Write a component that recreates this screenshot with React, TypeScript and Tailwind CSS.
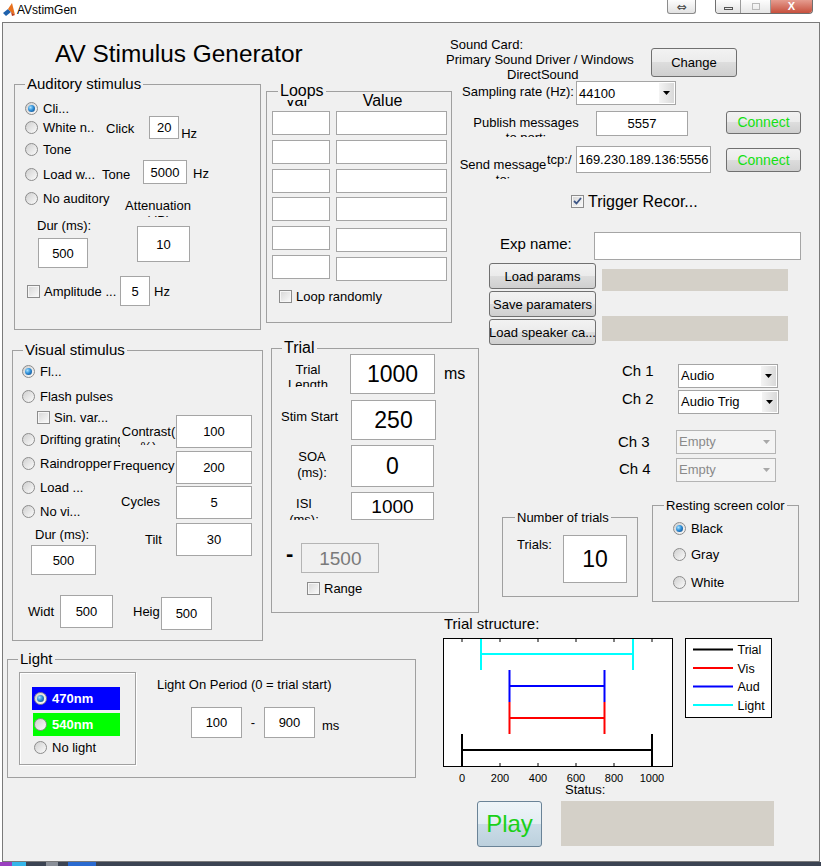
import type { ReactNode } from "react";

function Radio({ label, checked = false, className = "", h = "h-[16px]" }: { label: string; checked?: boolean; className?: string; h?: string }) {
  return (
    <div className={`flex items-center gap-[5px] whitespace-nowrap ${h} ${className}`}>
      <span className="flex h-[13px] w-[13px] shrink-0 items-center justify-center rounded-full border border-[#8c8c8c] bg-[linear-gradient(135deg,#cfcfcf,#fbfbfb)]">
        {checked && <span className="h-[7px] w-[7px] rounded-full bg-[radial-gradient(circle_at_35%_35%,#a8e2ff_0%,#2f8fd8_45%,#0b3d78_100%)]" />}
      </span>
      <span>{label}</span>
    </div>
  );
}

function Check({ label, checked = false, className = "", h = "h-[16px]", text = "text-[13px]" }: { label: string; checked?: boolean; className?: string; h?: string; text?: string }) {
  return (
    <div className={`flex items-center gap-[4px] whitespace-nowrap ${h} ${text} ${className}`}>
      <span className="flex h-[13px] w-[13px] shrink-0 items-center justify-center border border-[#8c8c8c] bg-[linear-gradient(135deg,#d6d6d6,#fbfbfb)] shadow-[inset_0_0_0_1px_#f6f6f6]">
        {checked && (
          <svg width="9" height="8" viewBox="0 0 9 8">
            <path d="M1 4 L3.5 6.5 L8 1" fill="none" stroke="#3d5686" strokeWidth="1.8" />
          </svg>
        )}
      </span>
      <span>{label}</span>
    </div>
  );
}

function Edit({ value = "", className = "", text = "text-[13px]", disabled = false }: { value?: string; className?: string; text?: string; disabled?: boolean }) {
  return (
    <div
      className={`flex shrink-0 items-center justify-center whitespace-nowrap border ${
        disabled ? "border-[#b4b4b4] bg-[#f0f0f0] text-[#7a7a7a]" : "border-[#a5a5a5] bg-white"
      } ${text} ${className}`}
    >
      {value}
    </div>
  );
}

function Btn({ children, className = "", text = "text-[13px]" }: { children: ReactNode; className?: string; text?: string }) {
  return (
    <button
      type="button"
      className={`flex shrink-0 items-center justify-center overflow-hidden whitespace-nowrap rounded-[3px] border border-[#707070] bg-[linear-gradient(#f2f2f2_0%,#ebebeb_49%,#dddddd_50%,#cfcfcf_100%)] leading-[15px] ${text} ${className}`}
    >
      {children}
    </button>
  );
}

function Popup({ value, disabled = false, className = "" }: { value: string; disabled?: boolean; className?: string }) {
  return (
    <div
      className={`flex shrink-0 items-stretch border text-[13px] ${
        disabled ? "border-[#b4b4b4] bg-[#f4f4f4] text-[#8a8a8a]" : "border-[#a5a5a5] bg-white text-black"
      } ${className}`}
    >
      <span className="flex flex-1 items-center pl-[2px]">{value}</span>
      <span
        className={`my-[1px] mr-[1px] flex w-[15px] items-center justify-center ${
          disabled ? "" : "bg-[linear-gradient(90deg,#f4f4f4,#d9d9d9)]"
        }`}
      >
        <svg width="7" height="4" viewBox="0 0 7 4">
          <path d="M0 0h7L3.5 4z" fill={disabled ? "#a8a8a8" : "#000"} />
        </svg>
      </span>
    </div>
  );
}

const loopRows = [
  { row: "mt-[4px]", val: "" },
  { row: "mt-[5px]", val: "" },
  { row: "mt-[5px]", val: "" },
  { row: "mt-[4px]", val: "" },
  { row: "mt-[5px]", val: "mt-[2px]" },
  { row: "mt-[3px]", val: "mt-[2px]" },
];

function TrialChart() {
  const x = (v: number) => 19 + v * 0.19;
  const ticks = [0, 200, 400, 600, 800, 1000];
  const bars = [
    { c: "#000000", a: 0, b: 1000, y: 112, y0: 96, y1: 128 },
    { c: "#ff0000", a: 250, b: 750, y: 80, y0: 64, y1: 96 },
    { c: "#0000ff", a: 250, b: 750, y: 48, y0: 32, y1: 64 },
    { c: "#00ffff", a: 100, b: 900, y: 16, y0: 1, y1: 32 },
  ];
  return (
    <svg width="230" height="146" viewBox="0 0 230 146" className="shrink-0 overflow-visible">
      <rect x="0.5" y="0.5" width="229" height="128" fill="#fff" stroke="#000" />
      {ticks.map((t) => (
        <g key={t}>
          <line x1={x(t)} x2={x(t)} y1="1" y2="4" stroke="#000" />
          <line x1={x(t)} x2={x(t)} y1="125" y2="128" stroke="#000" />
          <text x={x(t)} y="144" textAnchor="middle" fontSize="11" fontFamily="Liberation Sans, Arial, sans-serif" fill="#000">
            {t}
          </text>
        </g>
      ))}
      {bars.map((b) => (
        <g key={b.c} stroke={b.c} strokeWidth="2">
          <line x1={x(b.a)} x2={x(b.b)} y1={b.y} y2={b.y} />
          <line x1={x(b.a)} x2={x(b.a)} y1={b.y0} y2={b.y1} />
          <line x1={x(b.b)} x2={x(b.b)} y1={b.y0} y2={b.y1} />
        </g>
      ))}
    </svg>
  );
}

function ChartLegend() {
  const items = [
    { c: "#000000", t: "Trial", y: 11.5 },
    { c: "#ff0000", t: "Vis", y: 30 },
    { c: "#0000ff", t: "Aud", y: 48.5 },
    { c: "#00ffff", t: "Light", y: 67 },
  ];
  return (
    <svg width="87" height="80" viewBox="0 0 87 80" className="ml-[12px] shrink-0">
      <rect x="0.5" y="0.5" width="86" height="79" fill="#fff" stroke="#000" />
      {items.map((i) => (
        <g key={i.t}>
          <line x1="8" x2="48" y1={i.y} y2={i.y} stroke={i.c} strokeWidth="2" />
          <text x="52.5" y={i.y + 4.5} fontSize="12.5" fontFamily="Liberation Sans, Arial, sans-serif" fill="#000">
            {i.t}
          </text>
        </g>
      ))}
    </svg>
  );
}

function TitleBar() {
  return (
    <div className="flex h-[22px] items-start bg-white">
      <svg className="ml-[3px] mt-[3px]" width="12" height="14" viewBox="0 0 12 14">
        <path d="M0 10 L5 6 L8 9 L3 13Z" fill="#1f62ad" />
        <path d="M5 6 L9 0 L12 12 L8 9Z" fill="#e8711e" />
        <path d="M8 9 L12 12 L9 13Z" fill="#b8381a" />
      </svg>
      <span className="ml-[2px] mt-[3px] text-[12px] leading-[14px]">AVstimGen</span>
      <div className="flex-1" />
      <div className="flex h-[14px] w-[29px] items-center justify-center rounded-b-[3px] border border-t-0 border-[#8c8c8c] bg-[linear-gradient(#fdfdfd,#e2e2e2)] font-['DejaVu_Sans',sans-serif] text-[12px] leading-none text-[#444]">
        ⇔
      </div>
      <div className="ml-[19px] mr-[8px] flex h-[14px] overflow-hidden rounded-b-[4px] border border-t-0 border-[#6f6f6f]">
        <div className="flex w-[25px] items-end justify-center border-r border-[#9a9a9a] bg-[linear-gradient(#fdfdfd,#e2e2e2)] pb-[3px]">
          <span className="h-[3px] w-[9px] border border-[#555]" />
        </div>
        <div className="flex w-[30px] items-center justify-center border-r border-[#9a9a9a] bg-[linear-gradient(#fdfdfd,#e6e6e6)]">
          <span className="h-[7px] w-[8px] border border-[#b9b9b9]" />
        </div>
        <div className="flex w-[41px] items-center justify-center bg-[linear-gradient(#e59c8f,#c7503d)] text-[11px] font-bold leading-none text-white">
          X
        </div>
      </div>
    </div>
  );
}

function LeftColumn() {
  return (
    <div className="flex w-[440px] shrink-0 flex-col text-[13px] leading-[15px]">
      <div className="ml-[52px] mt-[17px] whitespace-nowrap text-[24.4px] leading-[28px]">AV Stimulus Generator</div>

      <div className="mt-[7px] flex items-start">
        <fieldset className="ml-[11px] h-[255px] w-[247px] min-w-0 shrink-0 border border-[#a0a0a0]">
          <legend className="ml-[10px] px-[2px] text-[15px] leading-[18px]">Auditory stimulus</legend>
          <Radio checked label="Cli..." className="ml-[10px] mt-[7px]" />
          <div className="flex h-[23px] items-start">
            <Radio label="White n.." className="ml-[10px] mt-[3px] w-[81px]" />
            <div className="mt-[5px]">Click</div>
            <Edit value="20" className="ml-[15px] h-[23px] w-[30px]" />
            <div className="ml-[2px] mt-[10px]">Hz</div>
          </div>
          <Radio label="Tone" className="ml-[10px] mt-[2px]" />
          <div className="mt-[3px] flex h-[24px] items-start">
            <Radio label="Load w..." className="ml-[10px] mt-[6px] w-[77px]" />
            <div className="mt-[7px] w-[41px]">Tone</div>
            <Edit value="5000" className="h-[24px] w-[44px]" />
            <div className="ml-[6px] mt-[6px]">Hz</div>
          </div>
          <div className="mt-[6px] flex items-start">
            <Radio label="No auditory" className="ml-[10px] w-[97px]" />
            <div className="mt-[8px] h-[19px] w-[72px] overflow-hidden text-center">Attenuation (dB)</div>
          </div>
          <div className="mt-[1px] flex items-start">
            <div className="ml-[22px] w-[54px] shrink-0">
              <div className="whitespace-nowrap">Dur (ms):</div>
              <Edit value="500" className="ml-[1px] mt-[5px] h-[30px] w-[50px]" />
            </div>
            <Edit value="10" className="ml-[46px] mt-[8px] h-[36px] w-[53px]" />
          </div>
          <div className="mt-[8px] flex items-start">
            <Check label="Amplitude ..." className="ml-[12px] mt-[7px] w-[93px]" />
            <Edit value="5" className="h-[30px] w-[30px]" />
            <div className="ml-[4px] mt-[8px]">Hz</div>
          </div>
        </fieldset>

        <fieldset className="ml-[5px] mt-[7px] h-[241px] w-[186px] min-w-0 shrink-0 border border-[#a0a0a0]">
          <legend className="relative z-10 ml-[11px] bg-[#f0f0f0] px-[2px] text-[16px] leading-[18px]">Loops</legend>
          <div className="-mt-[8px] flex h-[15px] overflow-hidden text-[16px] leading-[18px]">
            <span className="ml-[18px]">Var</span>
            <span className="ml-[54px]">Value</span>
          </div>
          {loopRows.map((r, i) => (
            <div key={i} className={`flex items-start ${r.row}`}>
              <Edit className="ml-[5px] h-[24px] w-[58px]" />
              <Edit className={`ml-[6px] h-[24px] w-[111px] ${r.val}`} />
            </div>
          ))}
          <Check label="Loop randomly" className="ml-[12px] mt-[7px]" />
        </fieldset>
      </div>

      <div className="mt-[9px] flex items-start">
        <fieldset className="ml-[9px] mt-[2px] h-[300px] w-[251px] min-w-0 shrink-0 border border-[#a0a0a0]">
          <legend className="ml-[10px] px-[2px] text-[15px] leading-[18px]">Visual stimulus</legend>
          <div className="flex items-start">
            <div className="flex w-[100px] shrink-0 flex-col">
              <Radio checked label="Fl..." className="ml-[9px] mt-[4px]" />
              <Radio label="Flash pulses" className="ml-[9px] mt-[9px]" />
              <Check label="Sin. var..." className="ml-[24px] mt-[5px]" />
              <Radio label="Drifting grating" className="ml-[9px] mt-[6px] w-[98px] overflow-hidden" />
              <Radio label="Raindropper" className="ml-[9px] mt-[8px]" />
              <Radio label="Load ..." className="ml-[9px] mt-[8px]" />
              <Radio label="No vi..." className="ml-[9px] mt-[8px]" />
              <div className="ml-[22px] mt-[8px] whitespace-nowrap">Dur (ms):</div>
              <Edit value="500" className="ml-[18px] mt-[3px] h-[30px] w-[65px]" />
            </div>
            <div className="mt-[56px] flex flex-col">
              <div className="flex items-start">
                <div className="ml-[8px] mt-[9px] h-[21px] w-[55px] overflow-hidden whitespace-nowrap text-center">
                  <div>Contrast(</div>
                  <div>%)</div>
                </div>
                <Edit value="100" className="h-[33px] w-[76px]" />
              </div>
              <div className="mt-[3px] flex items-start">
                <div className="mt-[7px] w-[63px] whitespace-nowrap">Frequency</div>
                <Edit value="200" className="h-[33px] w-[76px]" />
              </div>
              <div className="mt-[2px] flex items-start">
                <div className="ml-[8px] mt-[8px] w-[55px]">Cycles</div>
                <Edit value="5" className="h-[33px] w-[76px]" />
              </div>
              <div className="mt-[4px] flex items-start">
                <div className="ml-[32px] mt-[9px] w-[31px]">Tilt</div>
                <Edit value="30" className="h-[33px] w-[76px]" />
              </div>
            </div>
          </div>
          <div className="mt-[20px] flex items-start">
            <div className="ml-[15px] mt-[9px] w-[32px]">Widt</div>
            <Edit value="500" className="h-[33px] w-[53px]" />
            <div className="ml-[20px] mt-[9px] w-[28px]">Heig</div>
            <Edit value="500" className="mt-[2px] h-[33px] w-[51px]" />
          </div>
        </fieldset>

        <fieldset className="ml-[8px] h-[274px] w-[208px] min-w-0 shrink-0 border border-[#a0a0a0]">
          <legend className="ml-[10px] px-[2px] text-[16px] leading-[18px]">Trial</legend>
          <div className="-mt-[3px] flex items-start">
            <div className="ml-[8px] mt-[8px] h-[25px] w-[56px] overflow-hidden text-center">Trial Length</div>
            <Edit value="1000" text="text-[23px]" className="ml-[14px] h-[40px] w-[85px]" />
            <div className="ml-[9px] mt-[11px] text-[16px] leading-[18px]">ms</div>
          </div>
          <div className="mt-[6px] flex items-start">
            <div className="ml-[9px] mt-[9px] w-[70px] whitespace-nowrap">Stim Start</div>
            <Edit value="250" text="text-[23px]" className="h-[40px] w-[85px]" />
          </div>
          <div className="mt-[5px] flex items-start">
            <div className="ml-[15px] mt-[4px] w-[50px] text-center leading-[16px]">SOA (ms):</div>
            <Edit value="0" text="text-[23px]" className="ml-[14px] h-[42px] w-[83px]" />
          </div>
          <div className="mt-[5px] flex items-start">
            <div className="ml-[12px] mt-[4px] h-[24px] w-[40px] overflow-hidden text-center leading-[16px]">ISI (ms):</div>
            <Edit value="1000" text="text-[19px]" className="ml-[27px] h-[28px] w-[83px]" />
          </div>
          <div className="mt-[23px] flex items-start">
            <span className="ml-[14px] text-[22px] font-bold leading-[22px]">-</span>
            <Edit disabled value="1500" text="text-[19px]" className="ml-[8px] h-[30px] w-[78px]" />
          </div>
          <Check label="Range" className="ml-[35px] mt-[7px]" />
        </fieldset>
      </div>

      <fieldset className="ml-[4px] mt-[9px] h-[128px] w-[409px] min-w-0 shrink-0 border border-[#a0a0a0]">
        <legend className="ml-[10px] px-[2px] text-[15px] leading-[18px]">Light</legend>
        <div className="flex items-start">
          <div className="ml-[11px] mt-[4px] flex h-[93px] w-[117px] shrink-0 flex-col border border-[#a0a0a0] shadow-[inset_1px_1px_0_#ffffff,1px_1px_0_#ffffff]">
            <Radio checked label="470nm" h="h-[23px]" className="ml-[12px] mt-[14px] w-[88px] bg-[#0000ff] pl-[2px] font-bold text-white" />
            <Radio label="540nm" h="h-[23px]" className="ml-[13px] mt-[3px] w-[87px] bg-[#00ff00] pl-[1px] font-bold text-white" />
            <Radio label="No light" className="ml-[14px] mt-[3px]" />
          </div>
          <div className="ml-[21px] mt-[9px] flex flex-col">
            <div className="whitespace-nowrap">Light On Period (0 = trial start)</div>
            <div className="ml-[34px] mt-[15px] flex items-start">
              <Edit value="100" className="h-[31px] w-[51px]" />
              <div className="mt-[8px] w-[22px] text-center">-</div>
              <Edit value="900" className="h-[31px] w-[51px]" />
              <div className="ml-[7px] mt-[11px]">ms</div>
            </div>
          </div>
        </div>
      </fieldset>
    </div>
  );
}

function RightColumn() {
  const connect = "text-[14px] text-[#14e014]";
  return (
    <div className="flex flex-1 flex-col text-[13px] leading-[15px]">
      <div className="mt-[14px] flex h-[44px] items-start">
        <div className="w-[208px] shrink-0 whitespace-nowrap">
          <div className="ml-[7px]">Sound Card:</div>
          <div className="ml-[3px]">Primary Sound Driver / Windows</div>
          <div className="ml-[64px]">DirectSound</div>
        </div>
        <Btn className="mt-[11px] h-[29px] w-[86px]">Change</Btn>
      </div>

      <div className="flex h-[24px] items-start">
        <div className="ml-[19px] mt-[3px] w-[114px] whitespace-nowrap">Sampling rate (Hz):</div>
        <Popup value="44100" className="h-[24px] w-[100px]" />
      </div>

      <div className="mt-[6px] flex h-[26px] items-start">
        <div className="ml-[25px] mt-[4px] h-[22px] w-[116px] shrink-0 overflow-hidden text-center">Publish messages to port:</div>
        <Edit value="5557" className="ml-[12px] h-[25px] w-[92px]" />
        <Btn text={connect} className="ml-[38px] h-[23px] w-[75px]">Connect</Btn>
      </div>

      <div className="mt-[9px] flex h-[27px] items-start">
        <div className="ml-[16px] mt-[11px] h-[22px] w-[88px] shrink-0 overflow-hidden text-center">Send message to:</div>
        <div className="mt-[6px] h-[18px] w-[29px] shrink-0 overflow-hidden whitespace-nowrap">
          <div>tcp:/</div>
          <div className="ml-[3px]">/</div>
        </div>
        <Edit value="169.230.189.136:5556" className="h-[27px] w-[135px]" />
        <Btn text={connect} className="ml-[15px] mt-[2px] h-[24px] w-[75px]">Connect</Btn>
      </div>

      <div className="mt-[19px] flex h-[18px] items-center">
        <Check checked label="Trigger Recor..." h="h-[18px]" text="text-[16px]" className="ml-[128px]" />
      </div>

      <div className="mt-[22px] flex h-[28px] items-start">
        <div className="ml-[57px] mt-[3px] w-[94px] shrink-0 text-[15px] leading-[18px]">Exp name:</div>
        <Edit className="h-[28px] w-[207px]" />
      </div>

      <div className="mt-[3px] flex items-start">
        <div className="ml-[46px] flex w-[107px] shrink-0 flex-col gap-[2px]">
          <Btn className="h-[26px] w-[107px]">Load params</Btn>
          <Btn className="h-[26px] w-[107px]">Save paramaters</Btn>
          <Btn className="h-[26px] w-[107px]">Load speaker ca...</Btn>
        </div>
        <div className="ml-[6px] flex flex-col">
          <div className="mt-[6px] h-[22px] w-[186px] bg-[#d4d0c8]" />
          <div className="mt-[25px] h-[25px] w-[186px] bg-[#d4d0c8]" />
        </div>
      </div>

      <div className="mt-[19px] flex h-[24px] items-start text-[15px] leading-[18px]">
        <div className="-mt-[2px] ml-[179px] w-[56px] shrink-0">Ch 1</div>
        <Popup value="Audio" className="h-[24px] w-[100px]" />
      </div>
      <div className="mt-[2px] flex h-[24px] items-start text-[15px] leading-[18px]">
        <div className="ml-[179px] w-[56px] shrink-0">Ch 2</div>
        <Popup value="Audio Trig" className="h-[24px] w-[101px]" />
      </div>
      <div className="mt-[16px] flex h-[24px] items-start text-[15px] leading-[18px]">
        <div className="ml-[175px] mt-[3px] w-[58px] shrink-0">Ch 3</div>
        <Popup disabled value="Empty" className="h-[24px] w-[100px]" />
      </div>
      <div className="mt-[4px] flex h-[24px] items-start text-[15px] leading-[18px]">
        <div className="ml-[176px] mt-[2px] w-[57px] shrink-0">Ch 4</div>
        <Popup disabled value="Empty" className="h-[24px] w-[100px]" />
      </div>

      <div className="mt-[16px] flex items-start">
        <fieldset className="ml-[59px] mt-[12px] h-[87px] w-[136px] min-w-0 shrink-0 border border-[#a0a0a0]">
          <legend className="ml-[12px] px-[2px] text-[13px] leading-[15px]">Number of trials</legend>
          <div className="mt-[10px] flex items-start">
            <div className="ml-[14px] mt-[2px] w-[46px] shrink-0">Trials:</div>
            <Edit value="10" text="text-[23px]" className="h-[48px] w-[64px]" />
          </div>
        </fieldset>
        <fieldset className="ml-[14px] h-[104px] w-[147px] min-w-0 shrink-0 border border-[#a0a0a0]">
          <legend className="ml-[11px] px-[2px] text-[13px] leading-[15px]">Resting screen color</legend>
          <Radio checked label="Black" className="ml-[20px] mt-[7px]" />
          <Radio label="Gray" className="ml-[20px] mt-[10px]" />
          <Radio label="White" className="ml-[20px] mt-[12px]" />
        </fieldset>
      </div>

      <div className="ml-[1px] mt-[13px] text-[15px] leading-[17px]">Trial structure:</div>
      <div className="mt-[6px] flex h-[144px] items-start">
        <TrialChart />
        <ChartLegend />
      </div>
      <div className="ml-[122px]">Status:</div>
      <div className="mt-[4px] flex items-start">
        <button
          type="button"
          className="ml-[34px] flex h-[46px] w-[65px] items-center justify-center rounded-[3px] border border-[#6a8397] bg-[linear-gradient(#eef4f8_0%,#e3edf3_49%,#cbdce7_50%,#bcd0dd_100%)] text-[24px] leading-[28px] text-[#19d019]"
        >
          Play
        </button>
        <div className="ml-[19px] h-[45px] w-[213px] bg-[#d4d0c8]" />
      </div>
    </div>
  );
}

export default function App() {
  return (
    <div className="h-[866px] w-[821px] overflow-hidden bg-white font-['Liberation_Sans',Arial,sans-serif] text-black">
      <TitleBar />
      <div className="ml-[2px] flex h-[840px] w-[818px] border border-[#7a7a7a] bg-[#f0f0f0]">
        <LeftColumn />
        <RightColumn />
      </div>
      <div className="flex h-[4px] bg-[#3b4352]">
        <span className="w-[12px] bg-[#9a3fbf]" />
        <span className="w-[14px] bg-[#35b6ea]" />
        <span className="ml-[20px] w-[12px] bg-[#8a8f98]" />
        <span className="ml-[10px] w-[28px] bg-[#2a6ad0]" />
      </div>
    </div>
  );
}
